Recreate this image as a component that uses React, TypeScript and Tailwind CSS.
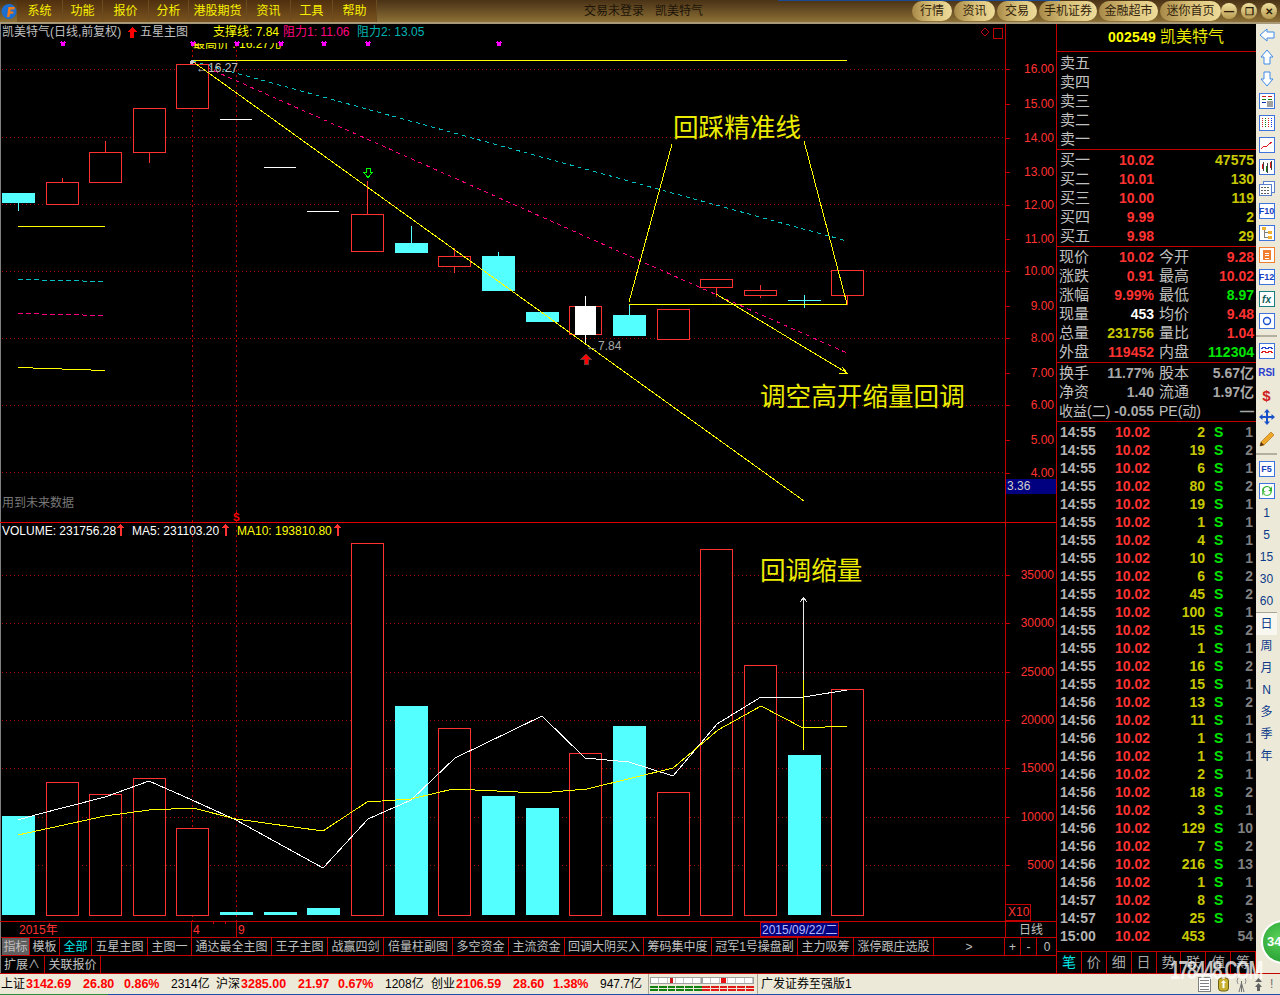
import type { ReactNode } from 'react';

const RED = '#ff3232';
const CYAN = '#54ffff';
const LINE = '#c40000';

const candles = [
  { l: 2, up: false, t: 193, b: 203, wt: 193, wb: 211 },
  { l: 46.5, up: true, t: 182.5, b: 204, wt: 178, wb: 204 },
  { l: 89.5, up: true, t: 152.5, b: 182.5, wt: 141, wb: 182 },
  { l: 133.5, up: true, t: 108.5, b: 152.5, wt: 108, wb: 163 },
  { l: 176.5, up: true, t: 64.5, b: 108.5, wt: 64, wb: 108 },
  { l: 351.5, up: true, t: 214.5, b: 251.5, wt: 181, wb: 251 },
  { l: 395, up: false, t: 243, b: 253, wt: 226, wb: 253 },
  { l: 438.5, up: true, t: 256.5, b: 266.5, wt: 248, wb: 273 },
  { l: 482, up: false, t: 256, b: 291, wt: 252, wb: 291 },
  { l: 526, up: false, t: 312, b: 322, wt: 312, wb: 322 },
  { l: 613, up: false, t: 315, b: 336, wt: 304, wb: 336 },
  { l: 657.5, up: true, t: 309.5, b: 339.5, wt: 309, wb: 339 },
  { l: 700.5, up: true, t: 279.5, b: 287.5, wt: 279, wb: 297 },
  { l: 744.5, up: true, t: 290.5, b: 295.5, wt: 285, wb: 298 },
  { l: 831.5, up: true, t: 270.5, b: 295.5, wt: 270, wb: 305 },
];

const dojis = [
  { x1: 220, x2: 252, y: 119.5 },
  { x1: 264, x2: 296, y: 167.5 },
  { x1: 307, x2: 339, y: 211.5 },
];

const volumes = [
  { l: 2, up: false, t: 816 },
  { l: 46.5, up: true, t: 782.5 },
  { l: 89.5, up: true, t: 794.5 },
  { l: 133.5, up: true, t: 778.5 },
  { l: 176.5, up: true, t: 828.5 },
  { l: 220, up: false, t: 912 },
  { l: 264, up: false, t: 912 },
  { l: 307, up: false, t: 908 },
  { l: 351.5, up: true, t: 543 },
  { l: 395, up: false, t: 706 },
  { l: 438.5, up: true, t: 728.5 },
  { l: 482, up: false, t: 796 },
  { l: 526, up: false, t: 808 },
  { l: 569.5, up: true, t: 753.5 },
  { l: 613, up: false, t: 726 },
  { l: 657.5, up: true, t: 792.5 },
  { l: 700.5, up: true, t: 549.5 },
  { l: 744.5, up: true, t: 665.5 },
  { l: 788, up: false, t: 755 },
  { l: 831.5, up: true, t: 689.5 },
];

const ma5 = '18,820 35,815 105,797 149,781 192,800 236,820 323,868 368,819 411,800 455,758 542,716 585,758 629,762 673,776 717,724 761,697 804,697 847,690';
const ma10 = '18,835 105,816 149,810 193,808 236,819 323,831 367,802 411,799 453,789 540,793 587,789 673,768 718,730 761,706 803,728 847,726';

const priceAxis = [
  ['16.00', 69], ['15.00', 104], ['14.00', 138], ['13.00', 172], ['12.00', 205], ['11.00', 239], ['10.00', 271],
  ['9.00', 306], ['8.00', 338], ['7.00', 373], ['6.00', 405], ['5.00', 440], ['4.00', 473],
] as const;
const volAxis = [
  ['35000', 575], ['30000', 623], ['25000', 672], ['20000', 720], ['15000', 768], ['10000', 817], ['5000', 865],
] as const;

const menu = [
  ['系统', 46], ['功能', 40], ['报价', 46], ['分析', 40], ['港股期货', 58], ['资讯', 44], ['工具', 42], ['帮助', 44],
] as const;
const pills = [['行情', 40], ['资讯', 41], ['交易', 40], ['手机证券', 58], ['金融超市', 59], ['迷你首页', 61]] as const;

const tabs = [
  ['指标', 28], ['模板', 30], ['全部', 32], ['五星主图', 56], ['主图一', 44], ['通达最全主图', 80], ['王子主图', 56],
  ['战赢四剑', 56], ['倍量柱副图', 69], ['多空资金', 56], ['主流资金', 56], ['回调大阴买入', 79], ['筹码集中度', 68],
  ['冠军1号操盘副', 86], ['主力吸筹', 56], ['涨停跟庄选股', 80], ['>', 71],
] as const;

const ticks: [string, string, boolean, string][] = [
  ['14:55', '2', true, '1'], ['14:55', '19', true, '2'], ['14:55', '6', true, '1'], ['14:55', '80', true, '2'],
  ['14:55', '19', true, '1'], ['14:55', '1', true, '1'], ['14:55', '4', true, '1'], ['14:55', '10', true, '1'],
  ['14:55', '6', true, '2'], ['14:55', '45', true, '2'], ['14:55', '100', true, '1'], ['14:55', '15', true, '2'],
  ['14:55', '1', true, '1'], ['14:55', '16', true, '2'], ['14:55', '15', true, '1'], ['14:56', '13', true, '2'],
  ['14:56', '11', true, '1'], ['14:56', '1', true, '1'], ['14:56', '1', true, '1'], ['14:56', '2', true, '1'],
  ['14:56', '18', true, '2'], ['14:56', '3', true, '1'], ['14:56', '129', true, '10'], ['14:56', '7', true, '2'],
  ['14:56', '216', true, '13'], ['14:56', '1', true, '1'], ['14:57', '8', true, '2'], ['14:57', '25', true, '3'],
  ['15:00', '453', false, '54'],
];

function TopBar() {
  return (
    <div className="flex h-[24px] bg-gradient-to-b from-[#4a3216] to-[#8d7136] border-b-2 border-[#a89a78] relative">
      <div className="absolute left-[778px] top-0 h-[1px] w-[282px] bg-[#1a4a90]" />
      <div className="w-[17px] flex items-center justify-center">
        <svg width="16" height="17" viewBox="0 0 16 17">
          <circle cx="8" cy="8.5" r="7.5" fill="#1c6fd0" />
          <path d="M6 14 L7.5 4 H14 L13.4 6.5 H9.8 L9.4 8.5 H12.6 L12.2 10.8 H9 L8.4 14 Z" fill="#f07a18" />
        </svg>
      </div>
      <div className="flex bg-gradient-to-b from-[#4f2f0e] to-[#7b5520]">
        {menu.map(([label, w]) => (
          <div key={label} style={{ width: w }} className="flex items-center justify-center text-[12px] text-[#f8f000] border-r border-[#6b4c20]">
            {label}
          </div>
        ))}
      </div>
      <div className="ml-[207px] flex items-center text-[12px] text-[#1c1408]">交易未登录</div>
      <div className="ml-[11px] flex items-center text-[12px] text-[#1c1408]">凯美特气</div>
      <div className="flex-1" />
      <div className="flex items-center gap-[2px]">
        {pills.map(([label, w]) => (
          <div key={label} style={{ width: w }} className="h-[20px] rounded-full flex items-center justify-center text-[12px] text-[#33240c] bg-gradient-to-r from-[#a88a48] via-[#d8c078] to-[#efdc9a]">
            {label}
          </div>
        ))}
      </div>
      <div className="flex items-center gap-[4px] mr-[3px]">
        {['—', '❐', '✕'].map(g => (
          <div key={g} className="w-[16px] h-[16px] rounded-full flex items-center justify-center text-[10px] font-bold text-[#2a1c08] bg-gradient-to-b from-[#f0e0a0] to-[#b89a50]">
            {g}
          </div>
        ))}
      </div>
    </div>
  );
}

function Arrow({ x, y, color = RED }: { x: number; y: number; color?: string }) {
  return <path d={`M${x} ${y} l-3.5 4 h2.5 v8 h2 v-8 h2.5 z`} fill={color} shapeRendering="crispEdges" />;
}

function Chart() {
  const clipId = 'maxprice';
  return (
    <svg width="1057" height="913" viewBox="0 24 1057 913" className="block text-[12px]" shapeRendering="crispEdges">
      <defs>
        <clipPath id={clipId}>
          <rect x="190" y="43" width="100" height="6" />
        </clipPath>
      </defs>

      {[69.5, 137.5, 204.5, 271.5, 338.5, 405.5, 472.5].map(y => (
        <line key={y} x1="2" x2="1005" y1={y} y2={y} stroke="#a80000" strokeDasharray="1 3" />
      ))}
      {[575.5, 623.5, 672.5, 720.5, 768.5, 817.5, 865.5].map(y => (
        <line key={y} x1="2" x2="1005" y1={y} y2={y} stroke="#a80000" strokeDasharray="1 3" />
      ))}
      {[192.5, 236.5].map(x => (
        <line key={x} x1={x} x2={x} y1="45" y2="921" stroke="#c00000" strokeDasharray="2 3" />
      ))}

      {[63, 193, 237, 281, 324, 368, 499].map(x => (
        <path key={x} d={`M${x - 2} 42 l4 4 M${x + 2} 42 l-4 4`} stroke="#ff00ff" strokeWidth="1.5" />
      ))}
      <text x="193" y="48" fill="#ffff00" clipPath={`url(#${clipId})`}>最高价 : 16.27元</text>

      <line x1="192" x2="847" y1="60.5" y2="60.5" stroke="#ffff00" />
      <line x1="192" y1="61" x2="847" y2="241" stroke="#00c0c0" strokeDasharray="4 4" />
      <line x1="192" y1="61" x2="847" y2="353" stroke="#ff0080" strokeDasharray="4 4" />

      {candles.map(c => (
        <g key={c.l}>
          <line x1={c.l + (c.up ? 16 : 16.5)} x2={c.l + (c.up ? 16 : 16.5)} y1={c.wt} y2={c.wb} stroke={c.up ? RED : CYAN} />
          {c.up ? (
            <rect x={c.l} y={c.t} width="32" height={c.b - c.t} fill="#000" stroke={RED} />
          ) : (
            <rect x={c.l} y={c.t} width="33" height={c.b - c.t} fill={CYAN} />
          )}
        </g>
      ))}
      {dojis.map(d => (
        <line key={d.x1} x1={d.x1} x2={d.x2} y1={d.y} y2={d.y} stroke="#fff" />
      ))}
      <rect x="569.5" y="306.5" width="32" height="28" fill="#000" stroke={RED} />
      <line x1="585.5" x2="585.5" y1="296" y2="344" stroke="#fff" />
      <rect x="575" y="306" width="21" height="29" fill="#fff" />
      <line x1="788" x2="821" y1="300.5" y2="300.5" stroke={CYAN} />
      <line x1="804.5" x2="804.5" y1="295" y2="308" stroke={CYAN} />

      <line x1="192" y1="61" x2="804" y2="501" stroke="#ffff00" />
      <polyline points="672,144 629,302" fill="none" stroke="#ffff00" />
      <line x1="629" x2="847" y1="304.5" y2="305" stroke="#ffff00" />
      <line x1="804" y1="141" x2="847" y2="304" stroke="#ffff00" />
      <line x1="716" y1="294" x2="847" y2="373" stroke="#ffff00" />
      <polyline points="842,367 847,373 839,373" fill="none" stroke="#ffff00" />

      <line x1="18" x2="105" y1="226.5" y2="226.5" stroke="#ffff00" />
      <line x1="18" y1="279.5" x2="105" y2="281.5" stroke="#00c0c0" strokeDasharray="5 3" />
      <line x1="18" y1="313.5" x2="105" y2="315.5" stroke="#ff0080" strokeDasharray="5 3" />
      <line x1="18" y1="367.5" x2="105" y2="370.5" stroke="#ffff00" />

      <path d="M366 168.5 h4 v4 h2.5 l-4.5 5 l-4.5 -5 h2.5 z" fill="none" stroke="#00ff00" />
      <path d="M586 354 l5 5 h-3 v5 h-4 v-5 h-3 z" fill="#ff0000" stroke="#6a3a3a" />
      <circle cx="192" cy="62" r="2" fill="#c8c8c8" />
      <text x="196" y="72" fill="#c0c0c0">←16.27</text>
      <text x="586" y="350" fill="#a8a8a8">←7.84</text>

      <text x="2" y="36" fill="#c0c0c0">凯美特气(日线,前复权)</text>
      <path d="M132 27 l5 5 h-3 v6 h-4 v-6 h-3 z" fill="#ff0000" />
      <text x="140" y="36" fill="#c0c0c0">五星主图</text>
      <text x="213" y="36" fill="#ffff00">支撑线: 7.84</text>
      <text x="283" y="36" fill="#ff0080">阻力1: 11.06</text>
      <text x="357" y="36" fill="#00b4b4">阻力2: 13.05</text>
      <path d="M985 28 l4 4 l-4 4 l-4 -4 z" fill="none" stroke="#c00000" />
      <rect x="993.5" y="28.5" width="9" height="10" fill="none" stroke="#c00000" />

      <text x="2" y="507" fill="#787878">用到未来数据</text>
      <text x="233" y="521" fill="#ff0000" className="text-[10px] font-bold">S</text>
      <path d="M236 512 l2 2 h-4 z" fill="#ff0000" />

      <text x="673" y="137" fill="#ecec00" className="text-[25.6px]">回踩精准线</text>
      <text x="760" y="406" fill="#ecec00" className="text-[25.6px]">调空高开缩量回调</text>
      <text x="760" y="580" fill="#ecec00" className="text-[25.6px]">回调缩量</text>

      <line x1="0" x2="1056" y1="522.5" y2="522.5" stroke="#e00000" />
      <text x="2" y="535" fill="#fff">VOLUME: 231756.28</text>
      <Arrow x={120.5} y={524} />
      <text x="132" y="535" fill="#fff">MA5: 231103.20</text>
      <Arrow x={225.5} y={524} />
      <text x="237" y="535" fill="#ffff00">MA10: 193810.80</text>
      <Arrow x={337.5} y={524} />

      {volumes.map(v =>
        v.up ? (
          <rect key={v.l} x={v.l} y={v.t} width="32" height={915 - v.t} fill="#000" stroke={RED} />
        ) : (
          <rect key={v.l} x={v.l} y={v.t} width="33" height={915 - v.t} fill={CYAN} />
        ),
      )}
      <polyline points={ma5} fill="none" stroke="#fff" />
      <polyline points={ma10} fill="none" stroke="#ffff00" />
      <line x1="803.5" x2="803.5" y1="598" y2="680" stroke="#e8e8e8" />
      <line x1="803.5" x2="803.5" y1="680" y2="750" stroke="#ffff00" />
      <path d="M803.5 597 l-3 5 M803.5 597 l3 5" stroke="#e8e8e8" fill="none" />

      <line x1="1005.5" x2="1005.5" y1="24" y2="937" stroke={LINE} />
      {priceAxis.map(([label, y]) => (
        <g key={label}>
          <line x1="1005" x2="1010" y1={y + 0.5} y2={y + 0.5} stroke={LINE} />
          <text x="1054" y={y + 4} fill={RED} textAnchor="end">{label}</text>
        </g>
      ))}
      {volAxis.map(([label, y]) => (
        <g key={label}>
          <line x1="1005" x2="1010" y1={y + 0.5} y2={y + 0.5} stroke={LINE} />
          <text x="1054" y={y + 4} fill={RED} textAnchor="end">{label}</text>
        </g>
      ))}
      <rect x="1006" y="479" width="50" height="15" fill="#000080" />
      <text x="1007" y="490" fill="#d0d0d0">3.36</text>

      <rect x="1005.5" y="904.5" width="25" height="16" fill="#000" stroke={LINE} />
      <text x="1008" y="916" fill={RED}>X10</text>
      <line x1="0" x2="1056" y1="921.5" y2="921.5" stroke={LINE} />
      <line x1="191.5" x2="191.5" y1="921" y2="937" stroke={LINE} />
      <line x1="236.5" x2="236.5" y1="921" y2="937" stroke={LINE} />
      <line x1="213.5" x2="213.5" y1="921" y2="924" stroke={LINE} />
      <line x1="225.5" x2="225.5" y1="921" y2="924" stroke={LINE} />
      <text x="19" y="934" fill={RED}>2015年</text>
      <text x="193" y="934" fill={RED}>4</text>
      <text x="238" y="934" fill={RED}>9</text>
      <rect x="760.5" y="922.5" width="78" height="14" fill="#000080" stroke={LINE} />
      <text x="762" y="934" fill="#b8b8ff">2015/09/22/二</text>
      <text x="1019" y="934" fill="#c0c0c0">日线</text>
    </svg>
  );
}

function TabRows() {
  return (
    <>
      <div className="flex h-[18px] pl-[1px] border-t border-[#c40000] text-[12px] text-[#c0c0c0]">
        {tabs.map(([label, w], i) => (
          <div
            key={label}
            style={{ width: w }}
            className={`flex items-center justify-center border-r border-[#c40000] ${i === 0 ? 'bg-[#606060]' : ''} ${label === '全部' ? 'text-[#00e8e8]' : ''}`}
          >
            {label}
          </div>
        ))}
        <div className="w-[16px] flex items-center justify-center border-r border-[#c40000]">+</div>
        <div className="w-[16px] flex items-center justify-center border-r border-[#c40000]">-</div>
        <div className="flex-1 flex items-center justify-center">0</div>
      </div>
      <div className="flex h-[18px] pl-[1px] border-t border-[#c40000] text-[12px] text-[#c0c0c0]">
        <div className="w-[43px] pl-[2px] flex items-center border-r border-[#c40000]">扩展∧</div>
        <div className="w-[56px] flex items-center justify-center border-r border-[#c40000]">关联报价</div>
      </div>
    </>
  );
}

function QuoteRow({ label, price, vol, priceColor = 'text-[#ff3232]' }: { label: string; price?: string; vol?: string; priceColor?: string }) {
  return (
    <div className="flex h-[19px] items-center pl-[3px] pr-[2px] text-[15px] text-[#c0c0c0]">
      <span className="w-[32px]">{label}</span>
      <span className={`w-[62px] text-right text-[14px] font-bold ${priceColor}`}>{price}</span>
      <span className="flex-1 text-right text-[14px] font-bold text-[#c8c800]">{vol}</span>
    </div>
  );
}

function PairRow({ a, av, ac, b, bv, bc }: { a: ReactNode; av: string; ac: string; b: ReactNode; bv: string; bc: string }) {
  return (
    <div className="flex h-[19px] items-center text-[15px] text-[#c0c0c0]">
      <div className="w-[97px] pl-[2px] flex justify-between items-center">
        <span className="whitespace-nowrap">{a}</span>
        <span className={`text-[14px] font-bold whitespace-nowrap ${ac}`}>{av}</span>
      </div>
      <div className="flex-1 ml-[5px] pr-[2px] flex justify-between items-center">
        <span className="whitespace-nowrap">{b}</span>
        <span className={`text-[14px] font-bold whitespace-nowrap ${bc}`}>{bv}</span>
      </div>
    </div>
  );
}

function QuotePanel() {
  const r = 'text-[#ff3232]';
  const g = 'text-[#00e600]';
  const d = 'text-[#a8a8a8]';
  return (
    <div className="w-[199px] flex flex-col bg-black">
      <div className="h-[28px] border-b border-[#c40000] flex items-center pl-[51px] text-[14px] text-[#ffff00]">
        <span className="font-bold tracking-[0.2px]">002549</span>
        <span className="ml-[4px] text-[16px] text-[#e8e800]">凯美特气</span>
      </div>
      <div className="h-[98px] pt-[2px] border-b border-[#c40000]">
        {['卖五', '卖四', '卖三', '卖二', '卖一'].map(l => (
          <QuoteRow key={l} label={l} />
        ))}
      </div>
      <div className="h-[97px] pt-[1px] border-b border-[#c40000]">
        <QuoteRow label="买一" price="10.02" vol="47575" />
        <QuoteRow label="买二" price="10.01" vol="130" />
        <QuoteRow label="买三" price="10.00" vol="119" />
        <QuoteRow label="买四" price="9.99" vol="2" />
        <QuoteRow label="买五" price="9.98" vol="29" />
      </div>
      <div className="h-[116px] pt-[1px] border-b border-[#c40000]">
        <PairRow a="现价" av="10.02" ac={r} b="今开" bv="9.28" bc={r} />
        <PairRow a="涨跌" av="0.91" ac={r} b="最高" bv="10.02" bc={r} />
        <PairRow a="涨幅" av="9.99%" ac={r} b="最低" bv="8.97" bc={g} />
        <PairRow a="现量" av="453" ac="text-white" b="均价" bv="9.48" bc={r} />
        <PairRow a="总量" av="231756" ac="text-[#c8c800]" b="量比" bv="1.04" bc={r} />
        <PairRow a="外盘" av="119452" ac={r} b="内盘" bv="112304" bc={g} />
      </div>
      <div className="h-[60px] pt-[1px] border-b border-[#c40000]">
        <PairRow a="换手" av="11.77%" ac={d} b="股本" bv="5.67亿" bc={d} />
        <PairRow a="净资" av="1.40" ac={d} b="流通" bv="1.97亿" bc={d} />
        <PairRow a={<span className="text-[14px]">收益(二)</span>} av="-0.055" ac={d} b={<span className="text-[14px]">PE(动)</span>} bv="—" bc={d} />
      </div>
      <div className="h-[533px] pt-[1px] border-b border-[#c40000] text-[14px] font-bold">
        {ticks.map(([time, vol, sell, n], i) => (
          <div key={i} className="flex h-[18px] items-center">
            <span className="w-[58px] pl-[3px] text-[#b4b4b4]">{time}</span>
            <span className="w-[36px] text-[#ff3232]">10.02</span>
            <span className="w-[54px] text-right text-[#c8c800]">{vol}</span>
            <span className="w-[17px] pl-[9px] text-[#00e600] whitespace-nowrap">{sell ? 'S' : ''}</span>
            <span className="flex-1 pr-[3px] text-right text-[#808080]">{n}</span>
          </div>
        ))}
      </div>
      <div className="flex flex-1 text-[14px] text-[#a8a8a8]">
        {['笔', '价', '细', '日', '势', '联', '值', '筹'].map((l, i) => (
          <div key={l} className={`w-[25px] flex items-center justify-center border-r border-[#c40000] ${i === 0 ? 'text-[#00e8e8]' : ''}`}>
            {l}
          </div>
        ))}
      </div>
    </div>
  );
}

function Box({ children, frame = '#3f74dc' }: { children?: ReactNode; frame?: string }) {
  return (
    <svg width="16" height="16" viewBox="0 0 16 16" shapeRendering="crispEdges">
      <rect x="0.5" y="0.5" width="15" height="15" fill="#fff" stroke={frame} />
      {children}
    </svg>
  );
}

function KeyIcon({ label, color = '#1a3fc0' }: { label: string; color?: string }) {
  return (
    <div className="w-[16px] h-[16px] border border-[#3f74dc] bg-white flex items-center justify-center text-[9px] font-bold leading-none" style={{ color }}>
      {label}
    </div>
  );
}

const arrowCls = '#3f8ae8';
const toolIcons: ReactNode[] = [
  <svg key="l" width="16" height="16" viewBox="0 0 16 16"><path d="M1 8 L8 2 V5 H15 V11 H8 V14 Z" fill="#fff" stroke={arrowCls} /></svg>,
  <svg key="u" width="16" height="16" viewBox="0 0 16 16"><path d="M8 1 L14 8 H11 V15 H5 V8 H2 Z" fill="#fff" stroke={arrowCls} /></svg>,
  <svg key="d" width="16" height="16" viewBox="0 0 16 16"><path d="M8 15 L14 8 H11 V1 H5 V8 H2 Z" fill="#fff" stroke={arrowCls} /></svg>,
  <Box key="a">
    <path d="M3 3.5 H7 M9 3.5 H13" stroke="#d02020" /><path d="M3 6.5 H7 M9 6.5 H13" stroke="#108010" /><path d="M3 9.5 H7" stroke="#1030c0" />
    <circle cx="11" cy="11" r="3.5" fill="#a0a0a0" />
  </Box>,
  <Box key="b">
    <path d="M3.5 3 V13" stroke="#d02020" strokeDasharray="1 1" /><path d="M6.5 3 V13" stroke="#108010" strokeDasharray="1 1" />
    <path d="M9.5 3 V13" stroke="#d02020" strokeDasharray="1 1" /><path d="M12.5 3 V13" stroke="#1030e0" strokeDasharray="1 1" />
  </Box>,
  <Box key="c"><polyline points="2,12 5,9 7,10 10,7 13,5" fill="none" stroke="#e01818" /></Box>,
  <Box key="e">
    <rect x="3" y="5" width="2" height="5" fill="#e01818" /><rect x="7" y="7" width="2" height="6" fill="#108010" /><rect x="11" y="3" width="2" height="6" fill="#e01818" />
    <path d="M4 3V12 M8 4V14 M12 2V11" stroke="#404040" />
  </Box>,
  <svg key="f" width="16" height="16" viewBox="0 0 16 16" shapeRendering="crispEdges">
    <rect x="4.5" y="0.5" width="11" height="11" fill="#fff" stroke="#5a80d0" />
    <rect x="0.5" y="3.5" width="12" height="11" fill="#fff" stroke="#5a80d0" />
    <path d="M2 6.5H11 M2 9.5H11 M2 12.5H11" stroke="#606060" strokeDasharray="2 1" />
  </svg>,
  <KeyIcon key="f10" label="F10" />,
  <Box key="g">
    <rect x="3" y="2" width="4" height="3" fill="#f0b030" /><rect x="9" y="6" width="4" height="3" fill="#f0b030" /><rect x="9" y="11" width="4" height="3" fill="#f0b030" />
    <path d="M5 5V12H9 M5 7.5H9" stroke="#808080" fill="none" />
  </Box>,
  <Box key="h" frame="#f08030">
    <rect x="4" y="3" width="8" height="10" fill="#f08030" /><path d="M6 6H10 M6 8.5H10 M6 11H10" stroke="#fff" />
  </Box>,
  <KeyIcon key="f12" label="F12" />,
  <div key="fx" className="w-[16px] h-[16px] border border-[#188080] bg-white flex items-center justify-center text-[10px] italic font-bold text-[#106060]">fx</div>,
  <Box key="i"><circle cx="8" cy="8" r="3.5" fill="none" stroke="#1a50d0" strokeWidth="1.4" shapeRendering="auto" /></Box>,
  null,
  <Box key="j">
    <polyline points="2,6 5,4 8,6 11,4 14,6" fill="none" stroke="#2040d0" /><polyline points="2,10 5,8 8,10 11,8 14,10" fill="none" stroke="#e01818" />
  </Box>,
  <div key="rsi" className="text-[10px] font-bold text-[#2a40d0] leading-none">RSI</div>,
  <div key="s" className="text-[15px] font-bold text-[#d02020] leading-none">$</div>,
  <svg key="m" width="16" height="16" viewBox="0 0 16 16">
    <path d="M8 0 L11 3.5 H9 V7 H12.5 V5 L16 8 L12.5 11 V9 H9 V12.5 H11 L8 16 L5 12.5 H7 V9 H3.5 V11 L0 8 L3.5 5 V7 H7 V3.5 H5 Z" fill="#1a50c8" />
  </svg>,
  <svg key="p" width="16" height="16" viewBox="0 0 16 16">
    <path d="M12 1 L15 4 L5 14 L1 15 L2 11 Z" fill="#f0a828" stroke="#a06810" strokeWidth="0.6" /><path d="M1 15 L2 11 L5 14 Z" fill="#503010" />
  </svg>,
];

function Toolbar() {
  const cell = 'h-[22px] flex items-center justify-center';
  return (
    <div className="w-[24px] pr-[3px] flex flex-col bg-[#ece9d8]">
      {toolIcons.map((icon, i) =>
        icon === null ? (
          <div key={i} className="h-[8px] flex items-center"><div className="w-full h-[2px] bg-[#b4b0a0]" /></div>
        ) : (
          <div key={i} className={cell}>{icon}</div>
        ),
      )}
      <div className="h-[8px] flex items-center"><div className="w-full h-[2px] bg-[#b4b0a0]" /></div>
      <div className={cell}><KeyIcon label="F5" /></div>
      <div className={cell}>
        <Box>
          <path d="M3 8 A5 5 0 0 1 12 5 L13 3 V8 H9 L11 6.5 A3 3 0 0 0 5 8 Z" fill="#30b030" shapeRendering="auto" />
          <path d="M13 8 A5 5 0 0 1 4 11 L3 13 V8 H7 L5 9.5 A3 3 0 0 0 11 8 Z" fill="#60c860" shapeRendering="auto" />
        </Box>
      </div>
      {['1', '5', '15', '30', '60'].map(t => (
        <div key={t} className={`${cell} text-[12px] text-[#0a3a8a]`}>{t}</div>
      ))}
      <div className="h-[1px] bg-[#a8a498]" />
      {['日', '周', '月', 'N', '多', '季', '年'].map((t, i) => (
        <div key={t} className={`${cell} text-[12px] text-[#0a3a8a] ${i === 0 ? 'bg-[#f7f6ef]' : ''}`}>{t}</div>
      ))}
    </div>
  );
}

function Meter({ color, mark, markAt }: { color: string; mark: string; markAt: number }) {
  return (
    <div className="w-[52px] flex flex-col gap-[2px]">
      <div className="flex h-[7px] border border-[#a0a0a0] bg-white">
        {[0, 1, 2, 3, 4, 5].map(i => (
          <div key={i} className="flex-1 border-r border-[#c8c8c8] flex justify-center">
            {i === markAt ? <div className={`h-full ${mark}`} /> : null}
          </div>
        ))}
      </div>
      <div className="flex flex-col gap-[1px]">
        {[0, 1].map(r => (
          <div key={r} className="flex gap-[1px]">
            {[0, 1, 2, 3, 4, 5].map(i => (
              <div key={i} className={`flex-1 h-[2px] ${color}`} />
            ))}
          </div>
        ))}
      </div>
    </div>
  );
}

function StatusBar() {
  const num = 'text-[12.5px] font-bold text-[#ff0000]';
  const items: [string, number, string][] = [
    ['上证', 25, ''], ['3142.69', 57, num], ['26.80', 41, num], ['0.86%', 47, num], ['2314亿', 45, ''],
    ['沪深', 25, ''], ['3285.00', 57, num], ['21.97', 40, num], ['0.67%', 47, num], ['1208亿', 46, ''],
    ['创业', 25, ''], ['2106.59', 57, num], ['28.60', 40, num], ['1.38%', 47, num], ['947.7亿', 47, ''],
  ];
  return (
    <div className="h-[20px] flex items-center bg-[#ece9d8] text-[12px] text-black pl-[1px]">
      {items.map(([t, w, cls]) => (
        <span key={t} style={{ width: w }} className={`whitespace-nowrap ${cls}`}>{t}</span>
      ))}
      <div className="h-full ml-[1px] pl-[1px] pr-[3px] border-l border-r border-[#a8a498] flex items-center">
        <Meter color="bg-[#108010]" mark="w-[3px] bg-[#c81818]" markAt={2} />
        <Meter color="bg-[#e01818]" mark="w-[5px] bg-[#e81010]" markAt={2} />
      </div>
      <span className="ml-[3px] text-[12px]">广发证券至强版1</span>
      <div className="flex-1" />
      <div className="flex items-center gap-[7px] pr-[4px]">
        <svg width="13" height="15" viewBox="0 0 13 15" shapeRendering="crispEdges">
          <rect x="0.5" y="0.5" width="12" height="14" fill="#fff" stroke="#808080" />
          <path d="M2 3.5H11 M2 6.5H11 M2 9.5H11 M2 12.5H11" stroke="#808080" />
        </svg>
        <svg width="11" height="15" viewBox="0 0 11 15"><rect x="0.5" y="1" width="10" height="13" rx="3" fill="#c8b030" stroke="#706010" /><path d="M5.5 3 L8 6 H3 Z M4.5 6 H6.5 V11 H4.5 Z" fill="#fff" /></svg>
        <svg width="11" height="15" viewBox="0 0 11 15"><path d="M5.5 4 V15 M3 15 L5.5 6 L8 15" stroke="#707070" fill="none" /><path d="M2 1 Q0 4 2 7 M9 1 Q11 4 9 7" stroke="#909090" fill="none" /></svg>
        <svg width="9" height="13" viewBox="0 0 9 13"><path d="M4.5 0 L8 4 H1 Z M4.5 5 L8 9 H1 Z" fill="#606060" /><rect x="3" y="9" width="3" height="4" fill="#606060" /></svg>
        <span className="text-[12px] text-[#707070] w-[6px]">!</span>
      </div>
    </div>
  );
}

export default function App() {
  return (
    <div className="relative w-[1280px] h-[995px] overflow-hidden bg-black flex flex-col font-['Liberation_Sans','Noto_Sans_CJK_SC',sans-serif]">
      <TopBar />
      <div className="flex h-[950px] border-b border-[#c40000]">
        <div className="w-[1057px] border-l border-[#808080] flex flex-col">
          <div className="-ml-[1px]"><Chart /></div>
          <TabRows />
        </div>
        <div className="w-[1px] bg-[#c40000] -ml-[1px]" />
        <QuotePanel />
        <Toolbar />
      </div>
      <StatusBar />
      <div className="h-[1px] flex">
        <div className="w-[108px] bg-[#2f8a3a]" />
        <div className="flex-1 bg-[#1f4fa8]" />
      </div>

      {/* notification ball and site watermark sit over the panel */}
      <div className="absolute left-[1261px] top-[920px] w-[44px] h-[44px] rounded-full border-2 border-white bg-[radial-gradient(circle_at_40%_40%,#58d058,#189028)] flex items-center pl-[4px] text-[13px] font-bold text-white">
        34
      </div>
      <div className="absolute left-[1170px] top-[958px] text-[18px] leading-none font-bold tracking-[-1.5px] text-white/75 whitespace-nowrap scale-y-[1.4] origin-top">
        178448.COM
      </div>
    </div>
  );
}
